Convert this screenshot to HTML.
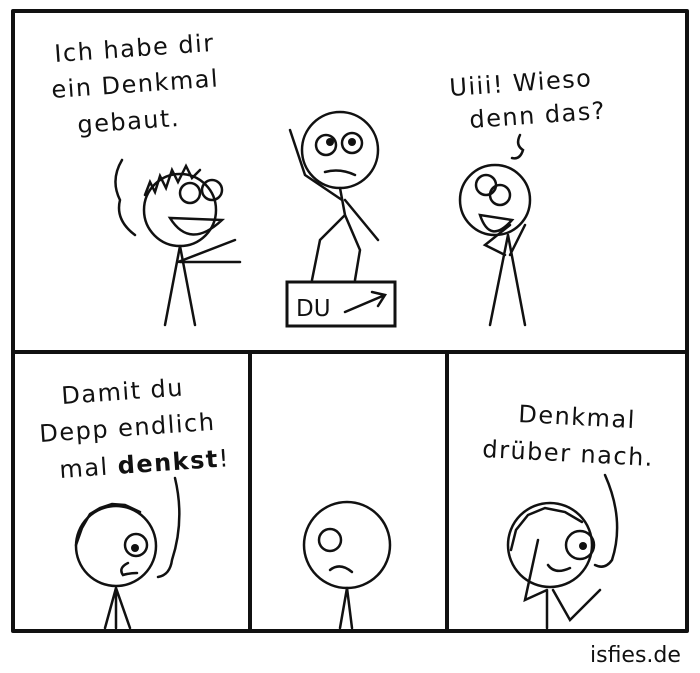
<!DOCTYPE html>
<html><head><meta charset="utf-8"><style>
html,body{margin:0;padding:0;background:#fff;width:700px;height:673px;overflow:hidden}
text{font-family:"DejaVu Sans","Liberation Sans",sans-serif;fill:#111}
</style></head><body>
<svg width="700" height="673" viewBox="0 0 700 673" xmlns="http://www.w3.org/2000/svg">
<g fill="none" stroke="#111" stroke-width="4" stroke-linejoin="round">
<path d="M13 11 L687 11 L687 631 L13 631 Z"/>
<path d="M13 352 L687 352"/>
<path d="M250 352 L250 631"/>
<path d="M447 352 L447 631"/>
</g>
<g font-size="24" letter-spacing="1.5">
<text x="55" y="62" transform="rotate(-4 55 62)">Ich habe dir</text>
<text x="52" y="98" transform="rotate(-4 52 98)">ein Denkmal</text>
<text x="78" y="133" transform="rotate(-4 78 133)">gebaut.</text>
<text x="450" y="96" transform="rotate(-4 450 96)">Uiii! Wieso</text>
<text x="470" y="128" transform="rotate(-4 470 128)">denn das?</text>
<text x="62" y="404" transform="rotate(-4 62 404)">Damit du</text>
<text x="40" y="442" transform="rotate(-4 40 442)">Depp endlich</text>
<text x="60" y="478" transform="rotate(-4 60 478)">mal <tspan font-weight="bold">denkst</tspan>!</text>
<text x="518" y="422" transform="rotate(3 518 422)">Denkmal</text>
<text x="482" y="457" transform="rotate(3 482 457)">drüber nach.</text>
<text x="590" y="662" font-size="22" letter-spacing="0">isfies.de</text>
<text x="296" y="316" font-size="23" letter-spacing="0">DU</text>
</g>
<g fill="none" stroke="#111" stroke-width="2.5" stroke-linecap="round">
<circle cx="180" cy="210" r="36"/>
<circle cx="190" cy="193" r="10"/><circle cx="212" cy="190" r="10"/>
<path d="M170 218 Q190 250 222 220 Z"/>
<path d="M180 246 L165 325 M180 246 L195 325 M178 262 L235 240 M180 262 L240 262"/>
<path d="M122 160 Q110 180 120 200 Q115 220 135 235"/>
<path d="M145 195 L150 182 L155 192 L160 176 L166 188 L172 170 L178 182 L186 166 L192 178 L200 170"/>
<circle cx="340" cy="150" r="38"/>
<circle cx="326" cy="145" r="10"/><circle cx="352" cy="143" r="10"/>
<path d="M325 172 Q340 168 355 175"/>
<path d="M340 188 L345 215 L320 240 L312 280 M345 215 L360 250 L355 280 M342 200 L305 175 L290 130 M345 200 L378 240"/>
<rect x="287" y="282" width="108" height="44" stroke-width="3"/>
<path d="M345 312 L385 295 M372 292 L385 295 L378 306"/>
<circle cx="495" cy="200" r="35"/>
<circle cx="486" cy="185" r="10"/><circle cx="500" cy="195" r="10"/>
<path d="M480 215 Q490 245 512 220 Z"/>
<path d="M508 235 L490 325 M508 235 L525 325 M505 255 L485 245 L510 225 M510 255 L525 225"/>
<path d="M520 135 Q515 145 523 150 Q520 160 512 158"/>
<circle cx="116" cy="546" r="40"/>
<circle cx="136" cy="545" r="11"/>
<path d="M128 563 Q118 568 123 575 Q130 573 137 573"/>
<path d="M116 588 L105 628 M116 588 L130 628 M116 588 L116 628"/>
<path d="M175 478 Q185 520 172 560 Q170 575 158 577"/>
<path d="M76 545 L82 528 L90 514 L100 508 L112 504 L125 505 L140 512"/>
<circle cx="347" cy="545" r="43"/>
<circle cx="330" cy="540" r="11"/>
<path d="M330 570 Q340 562 352 572"/>
<path d="M347 588 L340 628 M347 588 L352 628"/>
<circle cx="550" cy="545" r="42"/>
<circle cx="580" cy="545" r="14"/>
<path d="M548 565 Q555 575 570 568"/>
<path d="M547 590 L547 628 M547 590 L525 600 L538 540 M553 590 L570 620 L600 590 M605 475 Q625 520 612 560 Q605 570 595 565"/>
<path d="M511 550 L516 530 L528 515 L545 508 L565 512 L582 522"/>
</g>
<circle cx="135" cy="548" r="4" fill="#111"/>
<circle cx="583" cy="546" r="4" fill="#111"/>
<circle cx="330" cy="142" r="4" fill="#111"/><circle cx="352" cy="142" r="4" fill="#111"/>
</svg>
</body></html>
